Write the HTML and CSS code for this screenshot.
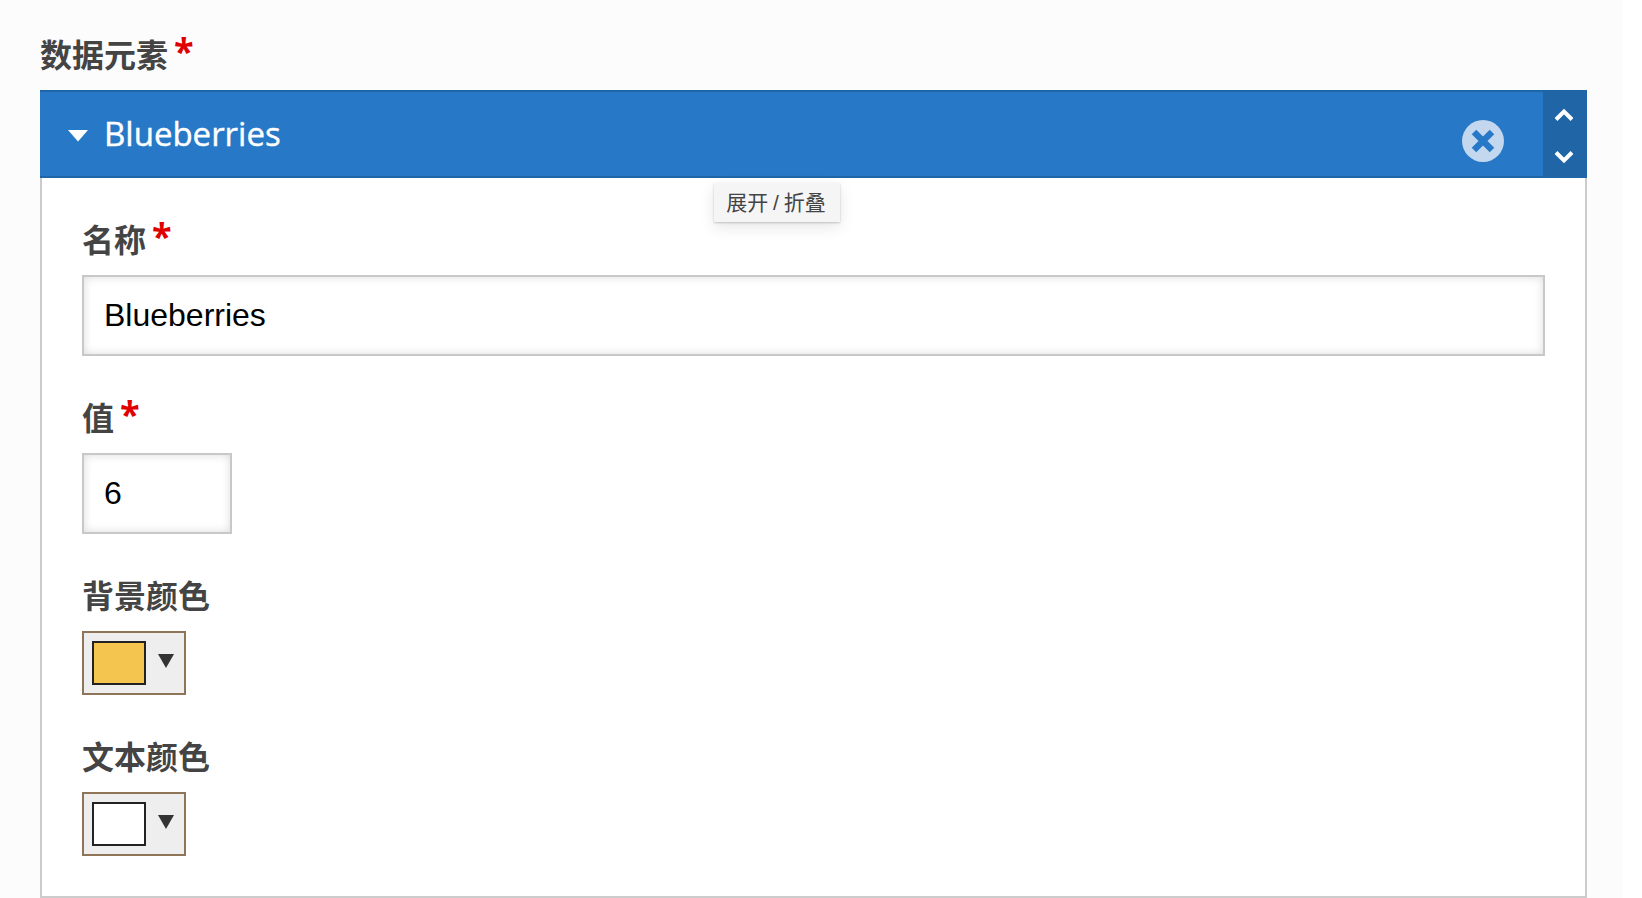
FILE: index.html
```html
<!DOCTYPE html>
<html lang="zh-CN">
<head>
    <meta charset="UTF-8">
    <title>数据元素</title>
    <link rel="stylesheet" href="styles.css">
</head>
<body>
    <div class="page">
        <h2 class="field-label top-label">数据元素 <span class="required">*</span></h2>

        <div class="item">
            <div class="item-header">
                <div class="item-title">
                    <svg class="caret" width="20" height="12" viewBox="0 0 20 12"><path d="M0 0H20L10 11.5Z" fill="#fff"/></svg>
                    <span class="item-name">Blueberries</span>
                </div>
                <div class="item-remove">
                    <svg width="42" height="42" viewBox="0 0 42 42">
                        <circle cx="21" cy="21" r="21" fill="#c3d7ee"/>
                        <path d="M12 12L30 30M30 12L12 30" stroke="#2779c7" stroke-width="6.4" fill="none"/>
                    </svg>
                </div>
                <div class="item-sort">
                    <svg width="20" height="14" viewBox="0 0 20 14"><path d="M2 11.5L10 3.5L18 11.5" stroke="#fff" stroke-width="4" fill="none"/></svg>
                    <svg width="20" height="14" viewBox="0 0 20 14"><path d="M2 2.5L10 10.5L18 2.5" stroke="#fff" stroke-width="4" fill="none"/></svg>
                </div>
            </div>
            <div class="tooltip">展开 / 折叠</div>

            <div class="item-body">
                <div class="field">
                    <label class="field-label">名称 <span class="required">*</span></label>
                    <input class="text-input" type="text" value="Blueberries">
                </div>
                <div class="field">
                    <label class="field-label">值 <span class="required">*</span></label>
                    <input class="text-input number-input" type="text" value="6">
                </div>
                <div class="field">
                    <label class="field-label">背景颜色</label>
                    <div class="color-button">
                        <span class="swatch swatch-yellow"></span>
                        <svg width="16" height="14" viewBox="0 0 16 14"><path d="M0 0H16L8 14Z" fill="#333"/></svg>
                    </div>
                </div>
                <div class="field">
                    <label class="field-label">文本颜色</label>
                    <div class="color-button">
                        <span class="swatch"></span>
                        <svg width="16" height="14" viewBox="0 0 16 14"><path d="M0 0H16L8 14Z" fill="#333"/></svg>
                    </div>
                </div>
            </div>
        </div>
    </div>
</body>
</html>
```

FILE: styles.css
```css
* {
    margin: 0;
    padding: 0;
    box-sizing: border-box;
}

body {
    background: #fff;
    font-family: "Liberation Sans", "Noto Sans CJK SC", sans-serif;
    height: 898px;
    overflow: hidden;
}

.page {
    width: 1623px;
    height: 898px;
    padding: 33px 36px 0 40px;
    background: #fcfcfc;
}

.field-label {
    display: block;
    height: 44px;
    margin-bottom: 13px;
    font-size: 32px;
    line-height: 46px;
    font-weight: 700;
    color: #444;
}

.required {
    margin-left: -3px;
    color: #e00000;
    font-family: "Open Sans", sans-serif;
    font-size: 36px;
    line-height: 30px;
    vertical-align: 3px;
}

.item {
    position: relative;
    height: 808px;
}

.item-header {
    display: flex;
    align-items: stretch;
    height: 88px;
    background: #2779c7;
    border-top: 2px solid #1f66a8;
    border-bottom: 2px solid #1f66a8;
    color: #fff;
}

.item-title {
    flex: 1;
    display: flex;
    align-items: center;
    gap: 16px;
    padding-left: 28px;
    font-family: "Open Sans", sans-serif;
    font-size: 33px;
}

.item-name {
    margin-top: -2px;
    -webkit-text-stroke: 0.4px #fff;
}

.caret {
    margin-top: 4px;
}

.item-remove {
    display: flex;
    align-items: center;
    padding: 13px 39px 0 0;
}

.item-sort {
    display: flex;
    flex-direction: column;
    align-items: center;
    justify-content: space-between;
    width: 44px;
    margin: -2px 0;
    padding: 18px 2px 14px 0;
    background: #2065a6;
}

.tooltip {
    position: absolute;
    left: 674px;
    top: 93px;
    width: 126px;
    height: 39px;
    padding-right: 2px;
    background: #f5f5f5;
    box-shadow: 0 1px 2px rgba(0, 0, 0, 0.2), 0 5px 16px rgba(0, 0, 0, 0.1);
    color: #444;
    font-size: 21px;
    line-height: 39px;
    text-align: center;
    word-spacing: -1px;
}

.item-body {
    height: 720px;
    padding: 40px 40px 0;
    background: #fff;
    border: 2px solid #ccc;
    border-top: none;
}

.field {
    margin-bottom: 40px;
}

.text-input {
    display: block;
    width: 100%;
    height: 81px;
    padding: 0 20px;
    border: 2px solid #c8c8c8;
    border-radius: 0;
    outline: none;
    background: #fff;
    box-shadow: inset 0 0 10px rgba(0, 0, 0, 0.14);
    font-family: "Liberation Sans", sans-serif;
    font-size: 32px;
    color: #000;
}

.number-input {
    width: 150px;
}

.color-button {
    display: flex;
    align-items: center;
    gap: 12px;
    width: 104px;
    height: 64px;
    padding-left: 8px;
    border: 2px solid #8f7459;
    background: #eee;
}

.color-button svg {
    margin-top: -5px;
}

.swatch {
    width: 54px;
    height: 44px;
    border: 2px solid #222;
    background: #fff;
}

.swatch-yellow {
    background: #f4c64f;
}
```
